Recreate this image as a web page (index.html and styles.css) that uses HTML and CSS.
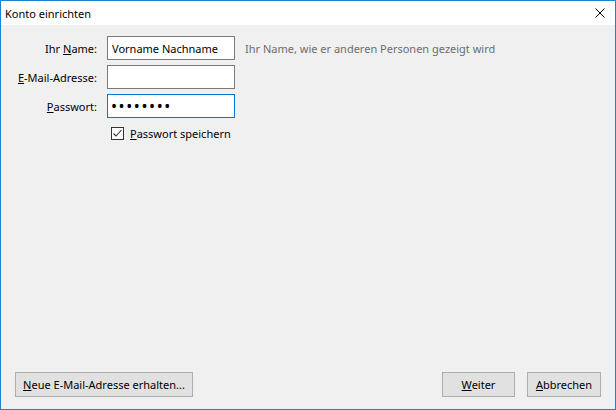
FILE: index.html
```html
<!DOCTYPE html>
<html lang="de">
<head>
    <meta charset="UTF-8">
    <meta name="viewport" content="width=device-width, initial-scale=1.0">
    <title>Konto einrichten</title>
    <link rel="stylesheet" href="styles.css">
</head>
<body>
    <div class="window">
        <div class="titlebar">
            <span class="title">Konto einrichten</span>
            <svg class="close" width="10" height="10" viewBox="0 0 10 10">
                <path d="M0.5 0.5 L9.5 9.5 M9.5 0.5 L0.5 9.5" stroke="#000" stroke-width="1" fill="none"/>
            </svg>
        </div>
        <div class="content">
            <form class="account-form">
                <label for="name">Ihr <u>N</u>ame:</label>
                <input type="text" id="name" value="Vorname Nachname">
                <span class="hint">Ihr Name, wie er anderen Personen gezeigt wird</span>

                <label for="email"><u>E</u>-Mail-Adresse:</label>
                <input type="text" id="email" value="">
                <span></span>

                <label for="password"><u>P</u>asswort:</label>
                <input type="password" id="password" class="focused" value="geheim12">
                <span></span>

                <span></span>
                <label class="check">
                    <span class="box">
                        <svg width="11" height="11" viewBox="0 0 11 11">
                            <path d="M1.5 5.5 L4 8 L9.5 2" stroke="#333" stroke-width="1.1" fill="none"/>
                        </svg>
                    </span>
                    <span><u>P</u>asswort speichern</span>
                </label>
            </form>
        </div>
        <div class="footer">
            <button type="button" class="btn btn-new"><u>N</u>eue E-Mail-Adresse erhalten...</button>
            <div class="spacer"></div>
            <button type="button" class="btn btn-next"><u>W</u>eiter</button>
            <button type="button" class="btn btn-cancel"><u>A</u>bbrechen</button>
        </div>
    </div>
</body>
</html>
```

FILE: styles.css
```css
/* dialog window */
body {
    margin: 0;
    font-family: "Noto Sans", "Open Sans", sans-serif;
    font-size: 11px;
    color: #000;
}
.window {
    width: 616px;
    height: 410px;
    box-sizing: border-box;
    border: 1px solid #1883d7;
    background: #f0f0f0;
    display: flex;
    flex-direction: column;
}
.titlebar {
    height: 24px;
    background: #fff;
    display: flex;
    align-items: center;
    padding: 0 10px 0 4px;
    flex-shrink: 0;
}
.title {
    flex: 1;
}
.close {
    display: block;
}
.content {
    flex: 1;
    padding: 11px 0 0 6px;
}
.account-form {
    display: grid;
    grid-template-columns: 90px 128px auto;
    grid-auto-rows: 24px;
    column-gap: 10px;
    row-gap: 5px;
    align-items: center;
    white-space: nowrap;
}
.account-form label {
    text-align: right;
}
.account-form input {
    width: 128px;
    height: 24px;
    box-sizing: border-box;
    border: 1px solid #7a7a7a;
    background: #fff;
    padding: 0 4px;
    margin: 0;
    font-family: inherit;
    font-size: 11px;
    outline: none;
}
.account-form input.focused {
    border-color: #0078d7;
}
.account-form input[type="password"] {
    font-size: 16px;
    letter-spacing: 1.6px;
    padding-left: 3px;
}
.hint {
    color: #6d6d6d;
}
.account-form label.check {
    grid-column: 2 / span 2;
    align-self: start;
    text-align: left;
    display: flex;
    align-items: center;
    gap: 6px;
    padding: 3px 0 0 4px;
}
.box {
    width: 13px;
    height: 13px;
    box-sizing: border-box;
    border: 1px solid #333;
    background: #fff;
    display: flex;
    align-items: center;
    justify-content: center;
}
.box svg {
    display: block;
}
.footer {
    display: flex;
    align-items: center;
    gap: 12px;
    padding: 0 14px 12px 14px;
}
.spacer {
    flex: 1;
}
.btn {
    height: 25px;
    border: 1px solid #adadad;
    background: #e1e1e1;
    font-family: inherit;
    font-size: 11px;
    color: #000;
    padding: 0 6px;
    white-space: nowrap;
}
.btn-new {
    width: 178px;
}
.btn-next {
    width: 73px;
}
.btn-cancel {
    width: 74px;
}
```
